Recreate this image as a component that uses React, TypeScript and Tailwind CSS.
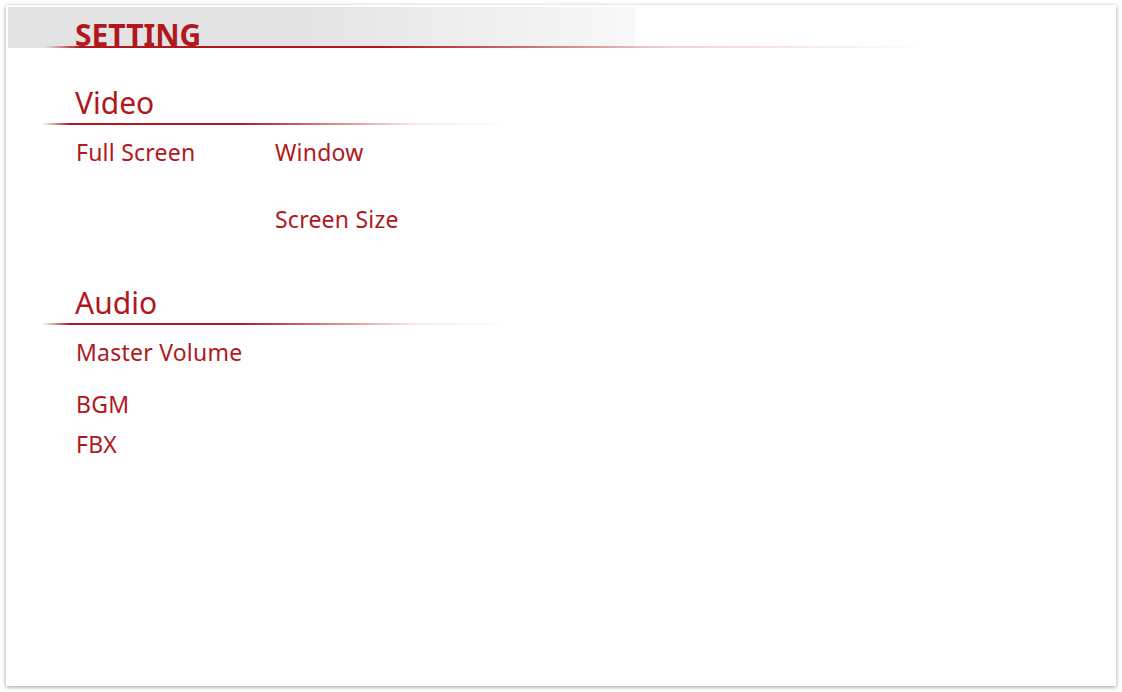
const RED = 'text-[#b0181d]'

function SectionTitle({ title, mt }: { title: string; mt: string }) {
  return (
    <div className={mt}>
      <h2 className={`pl-[67px] text-[30px] leading-none font-normal ${RED}`}>{title}</h2>
      <div className="mt-[5px] ml-[34px] h-[2px] w-[470px] bg-[linear-gradient(to_right,rgba(176,24,29,0),#b0181d_6%,#b0181d_42%,rgba(176,24,29,0.08)_80%,rgba(176,24,29,0))]" />
    </div>
  )
}

function Row({ left, right, mt }: { left?: string; right?: string; mt: string }) {
  return (
    <div className={`flex pl-[68px] text-[23px] leading-none tracking-[0.01em] ${RED} ${mt}`}>
      <span className="w-[199px]">{left}</span>
      {right && <span>{right}</span>}
    </div>
  )
}

export default function App() {
  return (
    <div className="min-h-screen bg-white pt-[5px] pl-[6px]" style={{ fontFamily: '"Noto Sans", "Open Sans", sans-serif' }}>
      <div className="h-[681px] w-[1110px] bg-white p-[2px] shadow-[0_1px_4px_rgba(0,0,0,0.4)]">
        <header>
          <div className="h-[41px] w-[627px] bg-[linear-gradient(to_right,#e3e3e3_45%,#f8f8f8)] pt-[16px] pl-[67px]">
            <h1 className={`text-[30px] leading-[24px] font-bold ${RED}`}>SETTING</h1>
          </div>
          <div className="-mt-[2px] ml-[37px] h-[2px] w-[885px] bg-[linear-gradient(to_right,rgba(176,24,29,0),#b0181d_4%,#b0181d_38%,rgba(176,24,29,0.2)_70%,rgba(176,24,29,0))]" />
        </header>

        <SectionTitle title="Video" mt="mt-[40px]" />
        <Row left="Full Screen" right="Window" mt="mt-[16px]" />
        <Row right="Screen Size" mt="mt-[44px]" />

        <SectionTitle title="Audio" mt="mt-[57px]" />
        <Row left="Master Volume" mt="mt-[16px]" />
        <Row left="BGM" mt="mt-[29px]" />
        <Row left="FBX" mt="mt-[17px]" />
      </div>
    </div>
  )
}
